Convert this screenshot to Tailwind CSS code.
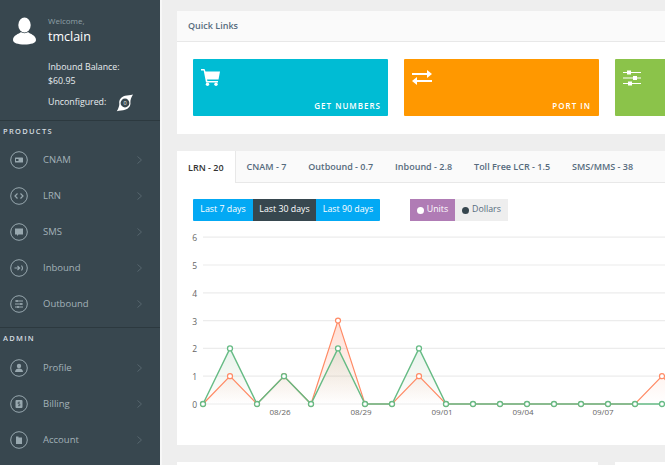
<!DOCTYPE html>
<html lang="en">
<head>
    <meta charset="UTF-8">
    <meta name="viewport" content="width=device-width, initial-scale=1.0">
    <title>Dashboard</title>
    <script src="https://cdn.jsdelivr.net/npm/@tailwindcss/browser@4"></script>
</head>
<body class="bg-[#eeeeee] font-['Open_Sans',sans-serif] overflow-hidden">
<div class="flex w-[665px] h-[465px] overflow-hidden">

    <!-- sidebar -->
    <aside class="w-[160px] h-[465px] shrink-0 bg-[#38474f] text-[#a3b2b9]">
        <div class="h-[121px] border-b border-[#2c393f]">
            <div class="flex pl-[13px] pt-[15px] gap-[12px]">
                <svg class="w-[23px] h-[28px] mt-[2px]" viewBox="0 0 23 28" fill="#fff"><ellipse cx="11.500" cy="8" rx="6.200" ry="7.500"/><path d="M8 15c-2 2-8 3-8 8 0 3 5 4.500 11.500 4.500S23 26 23 23c0-5-6-6-8-8-1 1.500-6 1.500-7 0z"/></svg>
                <div>
                    <div class="text-[8px] leading-[12px] text-[#8fa0a8]">Welcome,</div>
                    <div class="text-[12.500px] leading-[20px] text-white">tmclain</div>
                </div>
            </div>
            <div class="pl-[48px] pt-[13px] text-[8.800px] leading-[14px] text-[#e8edef]">
                <div>Inbound Balance:</div>
                <div>$60.95</div>
            </div>
            <div class="flex items-center pl-[48px] pt-[6px] gap-[10px] text-[8.800px] text-[#e8edef]">
                <span>Unconfigured:</span>
                <svg class="w-[18px] h-[18px]" viewBox="0 0 18 18" fill="none"><path d="M17 .5c-3 .8-5.500 .8-8 1.300C5 2.800 2.800 6 3.300 9.500 3.500 11.500 2.500 14.500 .8 17.300c3-.8 5.700-.8 8.200-1.500 3.700-1 5.900-4 5.400-7.500-.2-2.300 1-5.300 2.600-7.800z" fill="#fff"/><circle cx="9" cy="9" r="4.400" fill="#38474f"/><text x="9" y="11" font-size="5.500" text-anchor="middle" fill="#fff" font-family="Open Sans">0</text></svg>
            </div>
        </div>

        <div class="h-[207px] border-b border-[#2c393f]">
            <div class="pl-[3px] pt-[5px] h-[21px] text-[7.500px] font-semibold tracking-[1.300px] text-[#d5dde0]">PRODUCTS</div>
            <a class="flex items-center h-[36px] pl-[10px] pr-[18px] text-[9.500px]"><svg class="w-[18px] h-[18px] mr-[15px]" viewBox="0 0 18 18" fill="none" stroke="#98a8af"><circle cx="9" cy="9" r="8.300"/><rect x="5" y="6.500" width="8" height="5" rx=".6" fill="#98a8af" stroke="none"/><rect x="6" y="8" width="2.500" height="2" fill="#38474f" stroke="none"/></svg><span class="flex-1">CNAM</span><svg class="w-[5px] h-[8px]" viewBox="0 0 5 8" fill="none" stroke="#56666e"><path d="M.5.5 4.500 4 .5 7.500"/></svg></a>
            <a class="flex items-center h-[36px] pl-[10px] pr-[18px] text-[9.500px]"><svg class="w-[18px] h-[18px] mr-[15px]" viewBox="0 0 18 18" fill="none" stroke="#98a8af"><circle cx="9" cy="9" r="8.300"/><path d="M7.500 6.500 5 9l2.500 2.500M10.500 6.500 13 9l-2.500 2.500" stroke-width="1.200"/></svg><span class="flex-1">LRN</span><svg class="w-[5px] h-[8px]" viewBox="0 0 5 8" fill="none" stroke="#56666e"><path d="M.5.5 4.500 4 .5 7.500"/></svg></a>
            <a class="flex items-center h-[36px] pl-[10px] pr-[18px] text-[9.500px]"><svg class="w-[18px] h-[18px] mr-[15px]" viewBox="0 0 18 18" fill="none" stroke="#98a8af"><circle cx="9" cy="9" r="8.300"/><path d="M5 5.500h8v6H8.500L7 13v-1.500H5z" fill="#98a8af" stroke="none"/></svg><span class="flex-1">SMS</span><svg class="w-[5px] h-[8px]" viewBox="0 0 5 8" fill="none" stroke="#56666e"><path d="M.5.5 4.500 4 .5 7.500"/></svg></a>
            <a class="flex items-center h-[36px] pl-[10px] pr-[18px] text-[9.500px]"><svg class="w-[18px] h-[18px] mr-[15px]" viewBox="0 0 18 18" fill="none" stroke="#98a8af"><circle cx="9" cy="9" r="8.300"/><path d="M4.500 9h5M7.500 7l2.200 2-2.200 2M11.500 6.500c1.200 1.500 1.200 3.500 0 5" stroke-width="1.100"/></svg><span class="flex-1">Inbound</span><svg class="w-[5px] h-[8px]" viewBox="0 0 5 8" fill="none" stroke="#56666e"><path d="M.5.5 4.500 4 .5 7.500"/></svg></a>
            <a class="flex items-center h-[36px] pl-[10px] pr-[18px] text-[9.500px]"><svg class="w-[18px] h-[18px] mr-[15px]" viewBox="0 0 18 18" fill="none" stroke="#98a8af"><circle cx="9" cy="9" r="8.300"/><path d="M5 6h8M5 9h8M5 12h8"/><path d="M7 5v2M11 8v2M8 11v2" stroke-width="1.500"/></svg><span class="flex-1">Outbound</span><svg class="w-[5px] h-[8px]" viewBox="0 0 5 8" fill="none" stroke="#56666e"><path d="M.5.5 4.500 4 .5 7.500"/></svg></a>
        </div>

        <div>
            <div class="pl-[3px] pt-[5px] h-[22px] text-[7.500px] font-semibold tracking-[1.300px] text-[#d5dde0]">ADMIN</div>
            <a class="flex items-center h-[36px] pl-[10px] pr-[18px] text-[9.500px]"><svg class="w-[18px] h-[18px] mr-[15px]" viewBox="0 0 18 18" fill="none" stroke="#98a8af"><circle cx="9" cy="9" r="8.300"/><circle cx="9" cy="7" r="2.200" fill="#98a8af" stroke="none"/><path d="M5 13c0-2.500 2-3.500 4-3.500s4 1 4 3.500z" fill="#98a8af" stroke="none"/></svg><span class="flex-1">Profile</span><svg class="w-[5px] h-[8px]" viewBox="0 0 5 8" fill="none" stroke="#56666e"><path d="M.5.5 4.500 4 .5 7.500"/></svg></a>
            <a class="flex items-center h-[36px] pl-[10px] pr-[18px] text-[9.500px]"><svg class="w-[18px] h-[18px] mr-[15px]" viewBox="0 0 18 18" fill="none" stroke="#98a8af"><circle cx="9" cy="9" r="8.300"/><rect x="5.500" y="5" width="7" height="8" rx="1" fill="#98a8af" stroke="none"/><path d="M10 7.200H8.200v1.700h1.600v1.800H8" stroke="#38474f" stroke-width=".8"/></svg><span class="flex-1">Billing</span><svg class="w-[5px] h-[8px]" viewBox="0 0 5 8" fill="none" stroke="#56666e"><path d="M.5.5 4.500 4 .5 7.500"/></svg></a>
            <a class="flex items-center h-[36px] pl-[10px] pr-[18px] text-[9.500px]"><svg class="w-[18px] h-[18px] mr-[15px]" viewBox="0 0 18 18" fill="none" stroke="#98a8af"><circle cx="9" cy="9" r="8.300"/><path d="M6 5.500h2.500v1H12v6.500H6z" fill="#98a8af" stroke="none"/></svg><span class="flex-1">Account</span><svg class="w-[5px] h-[8px]" viewBox="0 0 5 8" fill="none" stroke="#56666e"><path d="M.5.5 4.500 4 .5 7.500"/></svg></a>
        </div>
    </aside>

    <!-- main column -->
    <main class="flex-1 min-w-0 pl-[15px] pt-[11px] border-l-2 border-[#f7f7f7] overflow-hidden">
        <div class="w-[520px] bg-white">
            <div class="h-[31px] bg-[#fafafa] border-b border-[#e8e8e8] pl-[11px] flex items-center text-[9px] font-semibold text-[#566b7d]">Quick Links</div>
            <div class="flex gap-[16px] pl-[16px] pt-[17px] h-[92px] overflow-hidden">
                <div class="w-[195px] h-[57px] shrink-0 bg-[#00bcd4] rounded-[1px] relative">
                    <svg class="absolute left-[8px] top-[10px] w-[19px] h-[17px]" viewBox="0 0 19 17" fill="#fff"><path d="M0 0h3.500l1 2.500H19l-1.500 8H6l.4 1.500H17v1.500H5L2.700 1.500H0z"/><circle cx="6.500" cy="15.300" r="1.700"/><circle cx="15" cy="15.300" r="1.700"/></svg>
                    <span class="absolute right-[7px] bottom-[4px] text-[8px] font-semibold tracking-[1px] text-white">GET NUMBERS</span>
                </div>
                <div class="w-[195px] h-[57px] shrink-0 bg-[#ff9800] rounded-[1px] relative">
                    <svg class="absolute left-[8px] top-[11px] w-[20px] h-[15px]" viewBox="0 0 20 15" fill="#fff"><path d="M0 3h15V0l5 4-5 4V5H0zM20 10H5V7l-5 4 5 4v-3h15z"/></svg>
                    <span class="absolute right-[8px] bottom-[4px] text-[8px] font-semibold tracking-[1px] text-white">PORT IN</span>
                </div>
                <div class="w-[195px] h-[57px] shrink-0 bg-[#8bc34a] rounded-[1px] relative">
                    <svg class="absolute left-[8px] top-[11px] w-[18px] h-[16px]" viewBox="0 0 18 16" fill="#fff"><path d="M0 2h18v1H0zM0 7.500h18v1H0zM0 13h18v1H0z"/><rect x="4" y=".5" width="4" height="4"/><rect x="10" y="6" width="4" height="4"/><rect x="5" y="11.500" width="4" height="4"/></svg>
                </div>
            </div>
        </div>

        <div class="w-[520px] h-[294px] mt-[17px] bg-white">
            <div class="flex h-[32px] bg-[#fafafa] border-b border-[#e8e8e8] text-[9px] font-semibold text-[#566b7d]">
                <div class="px-[11px] pt-[1px] h-[32px] flex items-center bg-white border-r border-[#e8e8e8] text-[#333]">LRN - 20</div>
                <div class="px-[11px] pt-[1px] flex items-center">CNAM - 7</div>
                <div class="px-[11px] pt-[1px] flex items-center">Outbound - 0.7</div>
                <div class="px-[11px] pt-[1px] flex items-center">Inbound - 2.8</div>
                <div class="px-[11px] pt-[1px] flex items-center">Toll Free LCR - 1.5</div>
                <div class="px-[11px] pt-[1px] flex items-center">SMS/MMS - 38</div>
            </div>
            <div class="flex pl-[16px] pt-[16px] text-[8.800px] h-[46px]">
                <div class="flex h-[22px] rounded-[1px] overflow-hidden text-white">
                    <div class="w-[60px] bg-[#03a9f4] flex items-center justify-center">Last 7 days</div>
                    <div class="w-[63px] bg-[#37474f] flex items-center justify-center">Last 30 days</div>
                    <div class="w-[64px] bg-[#03a9f4] flex items-center justify-center">Last 90 days</div>
                </div>
                <div class="flex h-[22px] ml-[30px]">
                    <div class="w-[45px] bg-[#b07cb5] text-white flex items-center justify-center gap-[3px]"><span class="w-[7px] h-[7px] rounded-full bg-white"></span>Units</div>
                    <div class="w-[53px] bg-[#eeeeee] text-[#566b7d] flex items-center justify-center gap-[3px]"><span class="w-[7px] h-[7px] rounded-full bg-[#37474f]"></span>Dollars</div>
                </div>
            </div>
            <svg id="chart" class="block w-[488px] h-[200px]" viewBox="177 229 488 200"></svg>
        </div>

        <div class="flex gap-[17px] mt-[17px]">
            <div class="w-[421px] h-[40px] shrink-0 bg-white"></div>
            <div class="w-[100px] h-[40px] shrink-0 bg-white"></div>
        </div>
    </main>
</div>

<script>
    // chart: one point every 27px, one unit is 27.8px
    const green = [0,2,0,1,0,2,0,0,2,0,0,0,0,0,0,0,0,0,0];
    const red   = [0,1,0,1,0,3,0,0,1,0,0,0,0,0,0,0,0,1,0];
    const xAt = i => 203 + 27 * i;
    const yAt = v => 404 - 27.8 * v;
    const line = d => d.map((v, i) => xAt(i) + ',' + yAt(v).toFixed(1)).join(' ');

    let html = `<defs>
        <linearGradient id="fr" x1="0" y1="0" x2="0" y2="1"><stop offset="0" stop-color="#ff8a65" stop-opacity=".28"/><stop offset="1" stop-color="#ff8a65" stop-opacity="0"/></linearGradient>
        <linearGradient id="fg" x1="0" y1="0" x2="0" y2="1"><stop offset="0" stop-color="#4caf78" stop-opacity=".14"/><stop offset="1" stop-color="#8d8d50" stop-opacity="0"/></linearGradient>
    </defs>`;

    for (let v = 0; v <= 6; v++) {
        html += `<line x1="203" x2="665" y1="${yAt(v)}" y2="${yAt(v)}" stroke="#ececec" stroke-width="1.200"/>`;
        html += `<text x="197" y="${yAt(v) + 4}" font-size="8.500" text-anchor="end" fill="#666" font-family="Open Sans">${v}</text>`;
    }
    [['08/26',280],['08/29',361],['09/01',442],['09/04',523],['09/07',603]].forEach(([t, x]) => {
        html += `<text x="${x}" y="415" font-size="8" text-anchor="middle" fill="#666" font-family="Open Sans">${t}</text>`;
    });

    html += `<polygon points="203,404 ${line(red)} 689,404" fill="url(#fr)"/>`;
    html += `<polygon points="203,404 ${line(green)} 689,404" fill="url(#fg)"/>`;
    html += `<polyline points="${line(red)}" fill="none" stroke="#ff8a65" stroke-width="1.200"/>`;
    html += `<polyline points="${line(green)}" fill="none" stroke="#66bb85" stroke-width="1.400"/>`;
    red.forEach((v, i) => {
        html += `<circle cx="${xAt(i)}" cy="${yAt(v)}" r="2.500" fill="#fff" stroke="#ff8a65" stroke-width="1.200"/>`;
    });
    green.forEach((v, i) => {
        html += `<circle cx="${xAt(i)}" cy="${yAt(v)}" r="2.500" fill="#fff" stroke="#66bb85" stroke-width="1.300"/>`;
    });
    document.getElementById('chart').innerHTML = html;
</script>
</body>
</html>
